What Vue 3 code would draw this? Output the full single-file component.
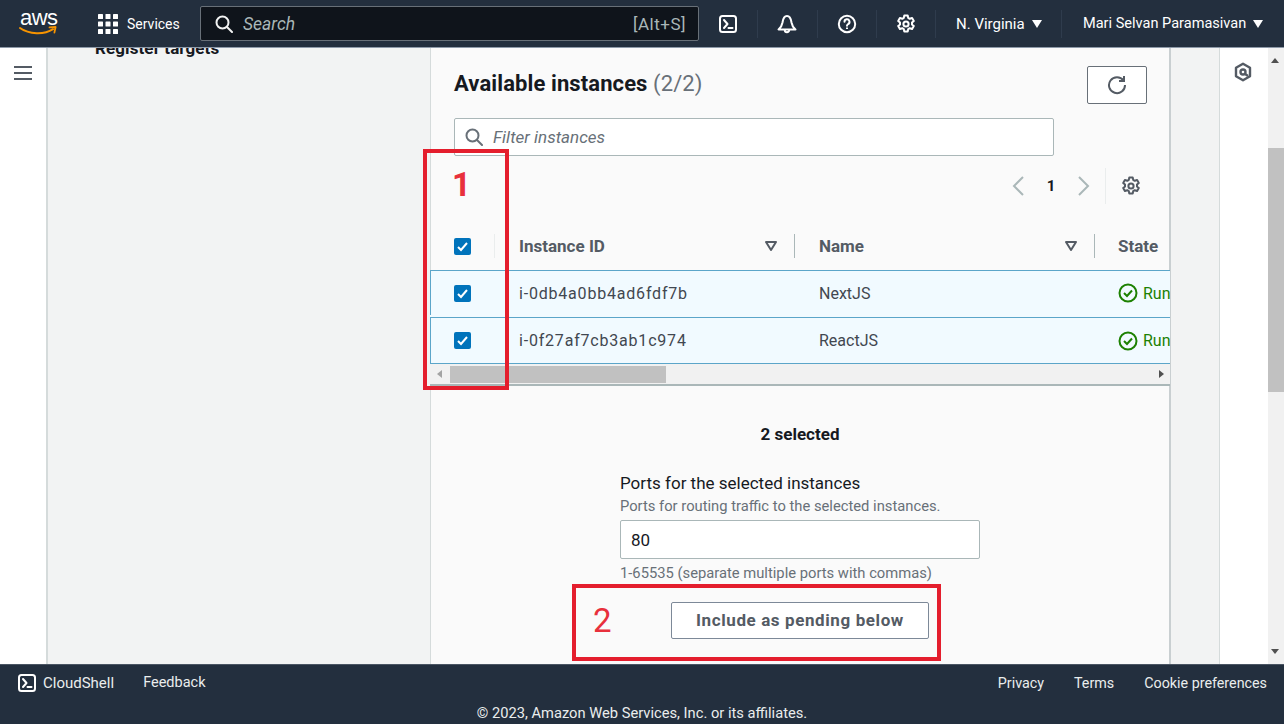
<script setup>
const instances = [
  { id: 'i-0db4a0bb4ad6fdf7b', name: 'NextJS' },
  { id: 'i-0f27af7cb3ab1c974', name: 'ReactJS' }
]
</script>

<template>
  <div class="app">
    <header class="topbar">
      <div class="logo">
        <span class="logo-text">aws</span>
        <svg class="smile" viewBox="0 0 38 10" width="38" height="10">
          <path d="M1 2c9 6.5 24 7 33 1.2" fill="none" stroke="#f79400" stroke-width="2" stroke-linecap="round" />
          <path d="M30.5 1.4 36.6 1 35.4 6.6" fill="none" stroke="#f79400" stroke-width="1.8" stroke-linecap="round" stroke-linejoin="round" />
        </svg>
      </div>
      <div class="services">
        <svg viewBox="0 0 20 20" width="20" height="20" fill="#fff">
          <rect v-for="n in 9" :key="n" :x="(n - 1) % 3 * 7.5" :y="Math.floor((n - 1) / 3) * 7.5" width="5" height="5" rx="0.6" />
        </svg>
        <span>Services</span>
      </div>
      <div class="search">
        <svg viewBox="0 0 18 18" width="18" height="18" fill="none" stroke="#f2f3f3" stroke-width="2">
          <circle cx="7.5" cy="7.5" r="6" />
          <path d="M12 12l5 5" stroke-linecap="round" />
        </svg>
        <span class="search-text">Search</span>
        <span class="search-key">[Alt+S]</span>
      </div>
      <div class="top-icons">
        <div class="top-icon">
          <svg viewBox="0 0 20 20" width="20" height="20" fill="none" stroke="#fff" stroke-width="2">
            <rect x="2" y="2" width="16" height="16" rx="2.5" />
            <path d="M6 6l3.5 4L6 14M10.5 14h4" stroke-linecap="round" stroke-linejoin="round" />
          </svg>
        </div>
        <div class="top-icon">
          <svg viewBox="0 0 20 20" width="20" height="20" fill="none" stroke="#fff" stroke-width="2">
            <path d="M1.500 15.500h17c-2.500-2-3.500-4-4-7C14 5 13 2 10 2S6 5 5.500 8.500c-.5 3-1.500 5-4 7z" stroke-linejoin="round" />
            <path d="M7.800 16a2.200 2.200 0 0 0 4.400 0" />
          </svg>
        </div>
        <div class="top-icon">
          <svg viewBox="0 0 20 20" width="20" height="20" fill="none" stroke="#fff" stroke-width="2">
            <circle cx="10" cy="10" r="8.200" />
            <path d="M7.500 7.800a2.500 2.500 0 1 1 3.700 2.200c-.8.5-1.200 1-1.200 1.800" stroke-linecap="round" />
            <path d="M10 13.600v1.500" />
          </svg>
        </div>
        <div class="top-icon">
          <svg viewBox="0 0 20 20" width="20" height="20" fill="none" stroke="#fff" stroke-width="2">
            <circle cx="10" cy="10" r="2.600" />
            <path d="M8.300 1.500h3.400l.5 2.400 1.500.9 2.400-.8 1.700 3-1.800 1.600v1.800l1.800 1.600-1.700 3-2.400-.8-1.500.9-.5 2.400H8.300l-.5-2.400-1.500-.9-2.400.8-1.700-3 1.800-1.600V8.600L2.200 7l1.700-3 2.400.8 1.500-.9z" stroke-linejoin="round" />
          </svg>
        </div>
      </div>
      <div class="top-menu region">N. Virginia<i class="caret"></i></div>
      <div class="top-menu user">Mari Selvan Paramasivan<i class="caret"></i></div>
    </header>

    <div class="body">
      <aside class="nav">
        <svg viewBox="0 0 18 14" width="18" height="14" fill="none" stroke="#545b64" stroke-width="2">
          <path d="M0 1h18M0 7h18M0 13h18" />
        </svg>
      </aside>

      <main class="content">
        <div class="steps">Register targets</div>

        <section class="panel">
          <div class="panel-head">
            <h2>Available instances <span>(2/2)</span></h2>
            <button class="refresh" type="button">
              <svg viewBox="0 0 20 20" width="20" height="20" fill="none" stroke="#545b64" stroke-width="2">
                <path d="M16.500 5.500A8 8 0 1 0 18 10" />
                <path d="M17 1v5h-5" />
              </svg>
            </button>
          </div>

          <div class="filter">
            <svg viewBox="0 0 18 18" width="18" height="18" fill="none" stroke="#687078" stroke-width="2">
              <circle cx="7.500" cy="7.500" r="6" />
              <path d="M12 12l5 5" stroke-linecap="round" />
            </svg>
            <span>Filter instances</span>
          </div>

          <div class="pager">
            <svg viewBox="0 0 12 20" width="12" height="20" fill="none" stroke="#aab7b8" stroke-width="2">
              <path d="M11 1 2 10l9 9" />
            </svg>
            <b>1</b>
            <svg viewBox="0 0 12 20" width="12" height="20" fill="none" stroke="#aab7b8" stroke-width="2">
              <path d="M1 1l9 9-9 9" />
            </svg>
            <span class="pager-sep"></span>
            <svg viewBox="0 0 20 20" width="20" height="20" fill="none" stroke="#545b64" stroke-width="2">
              <circle cx="10" cy="10" r="2.600" />
              <path d="M8.300 1.500h3.400l.5 2.400 1.500.9 2.400-.8 1.700 3-1.800 1.600v1.800l1.800 1.600-1.700 3-2.400-.8-1.500.9-.5 2.400H8.300l-.5-2.400-1.500-.9-2.400.8-1.700-3 1.800-1.600V8.600L2.200 7l1.700-3 2.400.8 1.500-.9z" stroke-linejoin="round" />
            </svg>
          </div>

          <div class="table">
            <div class="row head">
              <div class="cell check">
                <span class="box"><svg viewBox="0 0 17 17" width="17" height="17"><path d="M4 9l3 3 6-7" fill="none" stroke="#fff" stroke-width="2" /></svg></span>
              </div>
              <div class="cell">Instance ID<svg class="sort" viewBox="0 0 12 10" width="12" height="10"><path d="M1 1h10L6 9z" fill="none" stroke="#545b64" stroke-width="2" stroke-linejoin="round" /></svg></div>
              <div class="cell">Name<svg class="sort" viewBox="0 0 12 10" width="12" height="10"><path d="M1 1h10L6 9z" fill="none" stroke="#545b64" stroke-width="2" stroke-linejoin="round" /></svg></div>
              <div class="cell last">State</div>
            </div>
            <div v-for="item in instances" :key="item.id" class="row item">
              <div class="cell check">
                <span class="box"><svg viewBox="0 0 17 17" width="17" height="17"><path d="M4 9l3 3 6-7" fill="none" stroke="#fff" stroke-width="2" /></svg></span>
              </div>
              <div class="cell mono">{{ item.id }}</div>
              <div class="cell">{{ item.name }}</div>
              <div class="cell last running">
                <svg viewBox="0 0 20 20" width="20" height="20" fill="none" stroke="#1d8102" stroke-width="2">
                  <circle cx="10" cy="10" r="8.500" />
                  <path d="M6 10l3 3 5-5.500" />
                </svg>
                <span>Running</span>
              </div>
            </div>
            <div class="hscroll">
              <i class="arrow-left"></i>
              <span class="hthumb"></span>
              <i class="arrow-right"></i>
            </div>
          </div>

          <div class="selected">2 selected</div>

          <div class="ports">
            <label>Ports for the selected instances</label>
            <p class="desc">Ports for routing traffic to the selected instances.</p>
            <div class="port-input">80</div>
            <p class="hint">1-65535 (separate multiple ports with commas)</p>
            <button class="include" type="button">Include as pending below</button>
          </div>
        </section>
      </main>

      <aside class="tools">
        <svg viewBox="0 0 20 20" width="20" height="20" fill="none" stroke="#545b64" stroke-width="2.400">
          <path d="M10 1.800 17 5.800v8.400l-7 4-7-4V5.800z" stroke-linejoin="round" />
          <circle cx="10" cy="10" r="2.500" />
          <path d="M11.500 11.500 15 14" />
        </svg>
      </aside>

      <div class="vscroll">
        <i class="arrow-up"></i>
        <span class="vthumb"></span>
        <i class="arrow-down"></i>
      </div>

      <!-- annotations drawn over the screenshot -->
      <div class="mark mark-one"><span>1</span></div>
      <div class="mark mark-two"><span>2</span></div>
    </div>

    <footer class="footer">
      <div class="foot-row">
        <span class="shell">
          <svg viewBox="0 0 20 20" width="20" height="20" fill="none" stroke="#fff" stroke-width="2">
            <rect x="2" y="2" width="16" height="16" rx="2.500" />
            <path d="M6 6l3.500 4L6 14M10.500 14h4" stroke-linecap="round" stroke-linejoin="round" />
          </svg>
          CloudShell
        </span>
        <span class="feedback">Feedback</span>
        <span class="foot-links">
          <span>Privacy</span>
          <span>Terms</span>
          <span>Cookie preferences</span>
        </span>
      </div>
      <div class="copyright">© 2023, Amazon Web Services, Inc. or its affiliates.</div>
    </footer>
  </div>
</template>

<style>
html,
body {
  margin: 0;
  overflow: hidden;
}
</style>

<style scoped>
* {
  box-sizing: border-box;
}
.app {
  width: 1284px;
  height: 724px;
  display: flex;
  flex-direction: column;
  overflow: hidden;
  font-family: Roboto, "Noto Sans", sans-serif;
  font-size: 16px;
  color: #16191f;
}
.topbar {
  height: 48px;
  flex: none;
  background: #232f3e;
  color: #fff;
  display: flex;
  align-items: center;
  border-bottom: 1px solid #8d99a8;
}
.logo {
  width: 78px;
  height: 48px;
  position: relative;
  flex: none;
}
.logo-text {
  position: absolute;
  left: 20px;
  top: 6px;
  font-family: "Liberation Sans", sans-serif;
  font-size: 22px;
  line-height: 24px;
  letter-spacing: -0.5px;
}
.smile {
  position: absolute;
  left: 19px;
  top: 26px;
}
.services {
  display: flex;
  align-items: center;
  gap: 9px;
  width: 122px;
  padding-left: 20px;
  font-size: 14px;
  flex: none;
}
.search {
  width: 499px;
  height: 35px;
  flex: none;
  background: #0f141b;
  border: 1px solid #687078;
  border-radius: 2px;
  display: flex;
  align-items: center;
  padding: 0 12px 0 14px;
  color: #aab7b8;
}
.search-text {
  margin-left: 10px;
  font-style: italic;
  font-size: 17.5px;
  flex: 1;
}
.search-key {
  font-size: 17px;
  letter-spacing: 0.5px;
}
.top-icons {
  display: flex;
  flex: none;
}
.top-icon {
  width: 59.25px;
  height: 28px;
  display: flex;
  align-items: center;
  justify-content: center;
  border-right: 1px solid #2f3c4d;
}
.top-menu {
  font-size: 15px;
  display: flex;
  align-items: center;
  white-space: nowrap;
}
.region {
  width: 126px;
  padding-left: 20px;
  height: 28px;
  flex: none;
  border-right: 1px solid #2f3c4d;
}
.user {
  padding-left: 21px;
  font-size: 14.55px;
}
.caret {
  width: 0;
  height: 0;
  margin-left: 7px;
  border-left: 5px solid transparent;
  border-right: 5px solid transparent;
  border-top: 8px solid #fff;
}
.body {
  flex: 1;
  min-height: 0;
  display: flex;
  position: relative;
}
.nav {
  width: 48px;
  flex: none;
  background: #fff;
  border-right: 2px solid #d5dbdb;
  padding: 17px 0 0 14px;
}
.content {
  flex: 1;
  min-width: 0;
  background: #f2f3f3;
  display: flex;
  overflow: hidden;
}
.steps {
  width: 382px;
  flex: none;
  margin-top: -9px;
  padding-left: 47px;
  font-size: 17px;
  letter-spacing: 0.1px;
  font-weight: 700;
  color: #16191f;
  line-height: 18px;
  height: 18px;
  white-space: nowrap;
}
.panel {
  width: 741px;
  flex: none;
  background: #fafafa;
  border-left: 1px solid #d5dbdb;
  border-right: 2px solid #c9cfd1;
  position: relative;
}
.panel-head {
  height: 70px;
  display: flex;
  align-items: flex-start;
  justify-content: space-between;
  padding: 19px 22px 0 23px;
}
h2 {
  margin: 0;
  font-size: 22px;
  letter-spacing: 0.1px;
  font-weight: 700;
  line-height: 34px;
}
h2 span {
  font-weight: 400;
  color: #687078;
}
.refresh {
  width: 60px;
  height: 38px;
  margin-top: -1px;
  border: 1px solid #687078;
  border-radius: 2px;
  background: #fff;
  display: flex;
  align-items: center;
  justify-content: center;
  padding: 0;
}
.filter {
  margin-left: 23px;
  width: 600px;
  height: 38px;
  border: 1px solid #aab7b8;
  border-radius: 2px;
  background: #fff;
  display: flex;
  align-items: center;
  gap: 10px;
  padding-left: 10px;
  font-style: italic;
  color: #687078;
  font-size: 17px;
}
.pager {
  height: 66px;
  display: flex;
  align-items: center;
  justify-content: flex-end;
  padding-right: 28px;
  padding-bottom: 6px;
}
.pager b {
  width: 54px;
  text-align: center;
  font-size: 15px;
}
.pager-sep {
  width: 1px;
  height: 36px;
  background: #eaeded;
  margin: 0 15px;
}
.table {
  width: 740px;
  margin-left: -1px;
  overflow: hidden;
  border-bottom: 2px solid #aab7b8;
}
.row {
  display: grid;
  grid-template-columns: 65px 300px 300px 75px;
}
.row.head {
  height: 48px;
  font-weight: 700;
  color: #545b64;
  font-size: 17px;
}
.row.item {
  height: 47px;
  background: #f1faff;
  border-top: 1px solid #5ba5c9;
  padding-bottom: 2px;
  font-size: 16px;
  color: #414750;
}
.row.item:nth-child(3) {
  border-bottom: 1px solid #5ba5c9;
  padding-bottom: 0;
}
.mono {
  letter-spacing: 0.8px;
}
.cell {
  display: flex;
  align-items: center;
  padding-left: 24px;
  padding-right: 24px;
  justify-content: space-between;
  white-space: nowrap;
  overflow: hidden;
}
.head .cell {
  position: relative;
}
.head .cell::after {
  content: "";
  position: absolute;
  right: 0;
  top: 12px;
  height: 24px;
  width: 1px;
  background: #aab7b8;
}
.head .check::after {
  background: #eaeded;
}
.head .last::after {
  display: none;
}
.check {
  padding-left: 24px;
  padding-right: 0;
  justify-content: flex-start;
}
.item .check {
  border-left: 1px solid #5ba5c9;
  padding-left: 23px;
}
.box {
  width: 17px;
  height: 17px;
  border-radius: 2px;
  background: #0073bb;
  display: block;
}
.box svg {
  display: block;
}
.sort {
  flex: none;
  margin-right: -6px;
}
.last {
  padding-left: 23px;
  padding-right: 0;
  justify-content: flex-start;
}
.running {
  color: #1d8102;
  gap: 5px;
}
.running svg {
  flex: none;
}
.hscroll {
  height: 20px;
  background: #f1f1f1;
  display: flex;
  align-items: center;
  position: relative;
}
.hthumb {
  position: absolute;
  left: 20px;
  top: 2px;
  width: 216px;
  height: 17px;
  background: #c1c1c1;
}
.arrow-left,
.arrow-right {
  position: absolute;
  top: 6px;
  width: 0;
  height: 0;
  border-top: 4px solid transparent;
  border-bottom: 4px solid transparent;
}
.arrow-left {
  left: 7px;
  border-right: 5px solid #a3a3a3;
}
.arrow-right {
  right: 6px;
  border-left: 5px solid #505050;
}
.selected {
  margin-top: 37px;
  text-align: center;
  font-weight: 700;
  font-size: 17px;
  line-height: 22px;
}
.ports {
  width: 360px;
  margin: 27px auto 0;
  display: flex;
  flex-direction: column;
}
.ports label {
  font-size: 17px;
  line-height: 22px;
}
.desc,
.hint {
  margin: 0;
  font-size: 14.75px;
  color: #687078;
  line-height: 20px;
}
.desc {
  margin-top: 2px;
}
.port-input {
  margin-top: 4px;
  height: 39px;
  border: 1px solid #aab7b8;
  border-radius: 2px;
  background: #fff;
  display: flex;
  align-items: center;
  padding-left: 10px;
  font-size: 17px;
}
.hint {
  margin-top: 4px;
}
.include {
  margin: 19px auto 0;
  width: 258px;
  height: 37px;
  padding: 0 0 2px;
  border: 1px solid #7d8998;
  border-radius: 2px;
  background: #fff;
  font: 700 17px Roboto, "Noto Sans", sans-serif;
  letter-spacing: 0.6px;
  color: #545b64;
}
.tools {
  width: 49px;
  flex: none;
  background: #fff;
  border-left: 1px solid #d5dbdb;
  display: flex;
  justify-content: center;
  padding: 14px 2px 0 0;
  align-items: flex-start;
}
.vscroll {
  width: 16px;
  flex: none;
  background: #f1f1f1;
  position: relative;
}
.vthumb {
  position: absolute;
  top: 100px;
  left: 0;
  width: 16px;
  height: 244px;
  background: #c1c1c1;
}
.arrow-up,
.arrow-down {
  position: absolute;
  left: 3px;
  width: 0;
  height: 0;
  border-left: 4px solid transparent;
  border-right: 4px solid transparent;
}
.arrow-up {
  top: 10px;
  border-bottom: 5px solid #505050;
}
.arrow-down {
  bottom: 10px;
  border-top: 5px solid #505050;
}
.mark {
  position: absolute;
  border: 4px solid #e41e2d;
  color: #e8303c;
  pointer-events: none;
}
.mark span {
  position: absolute;
  line-height: 40px;
}
.mark-one {
  left: 423px;
  top: 101px;
  width: 86px;
  height: 241px;
}
.mark-one span {
  left: 25px;
  top: 12px;
  font-size: 33px;
  font-weight: 700;
}
.mark-two {
  left: 572px;
  top: 536px;
  width: 369px;
  height: 77px;
}
.mark-two span {
  left: 17px;
  top: 13px;
  font-size: 33px;
}
.footer {
  height: 60px;
  flex: none;
  background: #232f3e;
  color: #eaeded;
  font-size: 15px;
  border-top: 1px solid #4a5563;
}
.foot-row {
  height: 35px;
  display: flex;
  align-items: center;
  padding: 0 17px;
}
.shell {
  display: flex;
  align-items: center;
  gap: 6px;
}
.feedback {
  margin-left: 29px;
  font-size: 14.5px;
}
.foot-links {
  margin-left: auto;
  display: flex;
  gap: 30px;
  font-size: 14.3px;
}
.copyright {
  text-align: center;
  font-size: 14.7px;
  line-height: 20px;
  margin-top: 3px;
}
</style>
